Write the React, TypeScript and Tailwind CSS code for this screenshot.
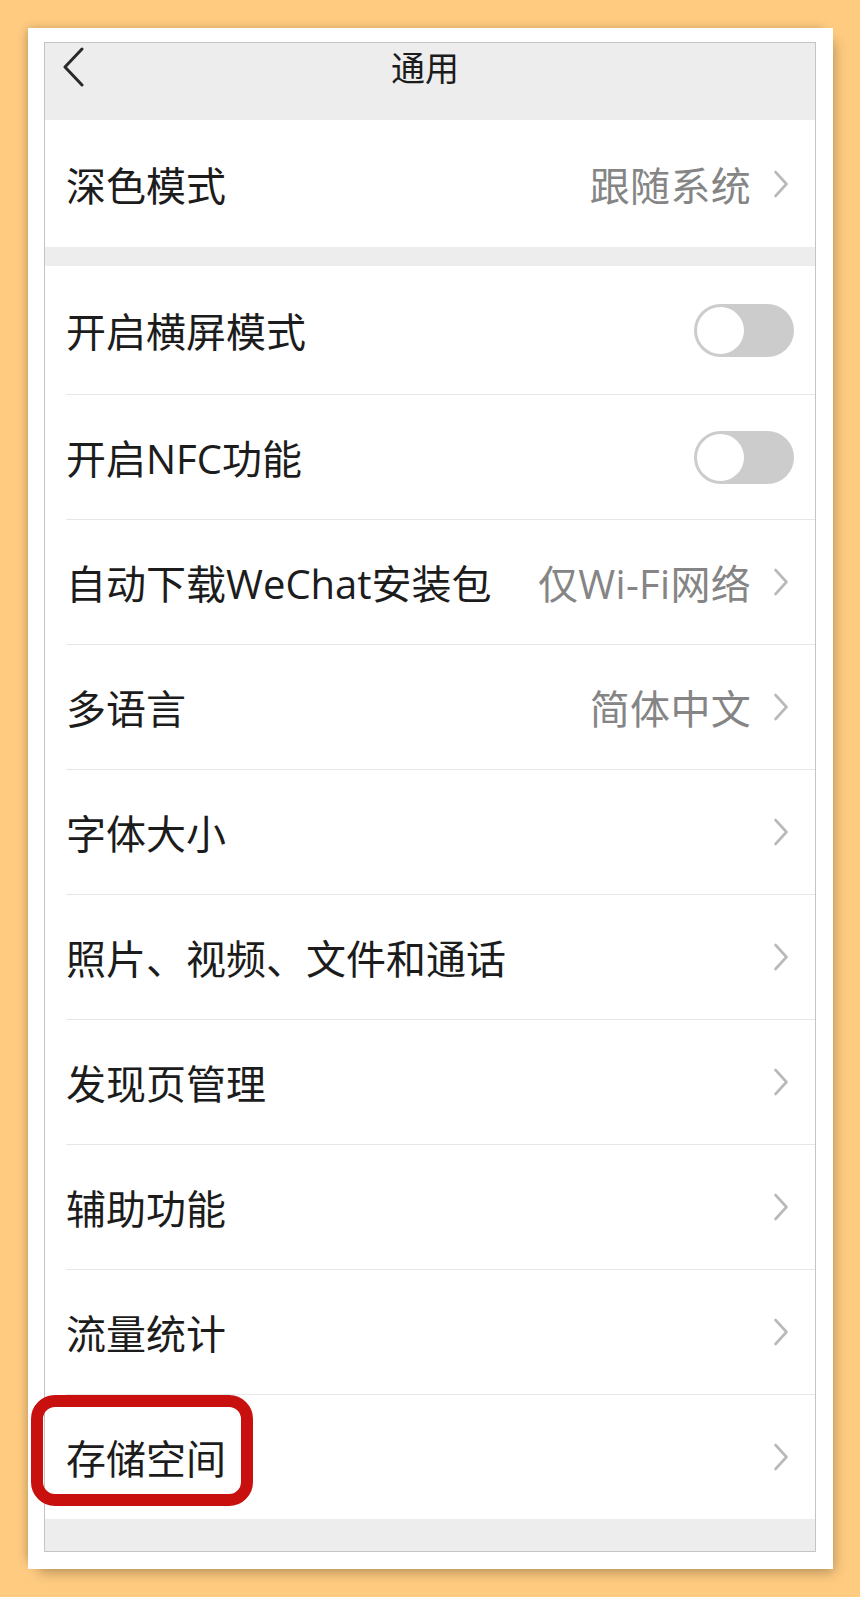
const font = { fontFamily: '"Open Sans", "Noto Sans CJK SC", sans-serif' }

type Row = { label: string; value?: string; toggle?: boolean }

const group: Row[] = [
  { label: '开启横屏模式', toggle: true },
  { label: '开启NFC功能', toggle: true },
  { label: '自动下载WeChat安装包', value: '仅Wi-Fi网络' },
  { label: '多语言', value: '简体中文' },
  { label: '字体大小' },
  { label: '照片、视频、文件和通话' },
  { label: '发现页管理' },
  { label: '辅助功能' },
  { label: '流量统计' },
  { label: '存储空间' },
]

function Chevron() {
  return (
    <svg width="16" height="28" viewBox="0 0 16 28" className="mr-[5px] shrink-0">
      <path d="M2.5 2 L13.5 14 L2.5 26" fill="none" stroke="#b9b9b9" strokeWidth="2.6" strokeLinecap="round" strokeLinejoin="round" />
    </svg>
  )
}

function Toggle() {
  return (
    <div className="w-[100px] h-[53px] rounded-full bg-[#cccccc] flex items-center pl-[3px]">
      <div className="w-[47px] h-[47px] rounded-full bg-white" />
    </div>
  )
}

function SettingRow({ row, first }: { row: Row; first?: boolean }) {
  return (
    <div className={`ml-[21px] flex items-center pr-[21px] ${first ? 'h-[128px]' : 'h-[125px] border-t border-[#e6e6e6]'}`}>
      <span className="flex-1 text-[40px] leading-none text-[#1c1c1c] pt-[4px]">{row.label}</span>
      {row.value && <span className="text-[40px] leading-none text-[#858585] mr-[22px] pt-[4px] tracking-[0.3px]">{row.value}</span>}
      {row.toggle ? <Toggle /> : <Chevron />}
    </div>
  )
}

export default function App() {
  return (
    <div className="relative w-[860px] h-[1597px] bg-[#fecb80] pt-[28px] pl-[28px]" style={font}>
      <div className="w-[805px] h-[1541px] bg-white pt-[14px] pl-[16px] shadow-[-5px_-3px_10px_-5px_rgba(0,0,0,0.3),6px_8px_12px_-5px_rgba(0,0,0,0.3)]">
        <div className="w-[772px] border border-[#c4c4c4] bg-[#ededed]">
          <div className="h-[77px] grid grid-cols-[1fr_auto_1fr] items-start">
            <svg width="24" height="40" viewBox="0 0 24 40" className="ml-[16px] mt-[4px]">
              <path d="M21 2 L4 20 L21 38" fill="none" stroke="#2a2a2a" strokeWidth="3" strokeLinecap="round" strokeLinejoin="round" />
            </svg>
            <span className="text-[34px] leading-none text-[#1c1c1c] pt-[8px] mr-[10px]">通用</span>
            <span />
          </div>
          <div className="bg-white h-[127px] flex items-center">
            <div className="w-full">
              <SettingRow row={{ label: '深色模式', value: '跟随系统' }} first />
            </div>
          </div>
          <div className="h-[19px]" />
          <div className="bg-white">
            {group.map((r, i) => (
              <SettingRow key={r.label} row={r} first={i === 0} />
            ))}
          </div>
          <div className="h-[32px]" />
        </div>
      </div>
      <div className="absolute left-[31px] top-[1395px] w-[222px] h-[111px] border-[12px] border-[#c8100e] rounded-[24px]" />
    </div>
  )
}
